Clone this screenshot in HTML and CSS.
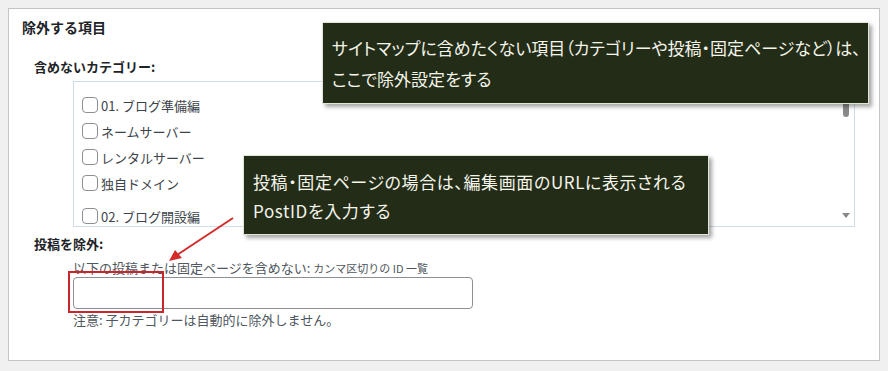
FILE: index.html
```html
<!DOCTYPE html>
<html lang="ja">
<head>
    <meta charset="UTF-8">
    <meta name="viewport" content="width=device-width, initial-scale=1.0">
    <title>除外する項目</title>
    <link rel="stylesheet" href="styles.css">
</head>
<body>
    <div class="panel">
        <h3 class="panel-title">除外する項目</h3>

        <div class="field">
            <div class="field-label">含めないカテゴリー:</div>
            <div class="cat-box">
                <ul class="cat-list">
                    <li><span class="check"></span>01. ブログ準備編</li>
                    <li><span class="check"></span>ネームサーバー</li>
                    <li><span class="check"></span>レンタルサーバー</li>
                    <li><span class="check"></span>独自ドメイン</li>
                </ul>
                <ul class="cat-list cat-group">
                    <li><span class="check"></span>02. ブログ開設編</li>
                </ul>
                <span class="scroll-thumb"></span>
                <span class="scroll-arrow"></span>
            </div>
        </div>

        <div class="field field-posts">
            <div class="field-label">投稿を除外:</div>
            <div class="post-block">
                <p class="desc">以下の投稿または固定ページを含めない: <small>カンマ区切りの ID 一覧</small></p>
                <div class="input-wrap">
                    <input type="text" class="text-input">
                    <span class="mark-box"></span>
                </div>
                <p class="note">注意: 子カテゴリーは自動的に除外しません。</p>
            </div>
        </div>

        <svg class="arrow" width="80" height="60" viewBox="0 0 80 60">
            <line x1="75" y1="5" x2="19" y2="42" stroke="#d42a2a" stroke-width="2"></line>
            <polygon points="11,48 17,37 24,45" fill="#d42a2a"></polygon>
        </svg>

        <div class="callout callout-top">
            サイトマップに含めたくない項目（カテゴリーや投稿・固定ページなど）は、<br>ここで除外設定をする
        </div>
        <div class="callout callout-mid">
            投稿・固定ページの場合は、編集画面のURLに表示される<br>PostIDを入力する
        </div>
    </div>
</body>
</html>
```

FILE: styles.css
```css
body {
    margin: 8px;
    background-color: #f0f0f1;
    font-family: "Noto Sans CJK JP", "Noto Sans", sans-serif;
    color: #1d2327;
}
.panel {
    position: relative;
    height: 343px;
    padding: 8px 13px 0;
    background-color: #fff;
    border: 1px solid #c3c4c7;
}
.panel-title {
    margin: 0;
    font-size: 14px;
    line-height: 20px;
    font-weight: 700;
}
.field {
    margin-top: 20px;
    padding-left: 12px;
}
.field-label {
    font-size: 13px;
    line-height: 20px;
    font-weight: 700;
}
.cat-box {
    position: relative;
    overflow: hidden;
    width: 764px;
    height: 134px;
    margin: 4px 0 0 39px;
    padding: 10px 8px 0;
    border: 1px solid #cfdde8;
}
.cat-list {
    margin: 0;
    padding: 0;
    list-style: none;
}
.cat-group {
    margin-top: 7px;
}
.cat-list li {
    display: flex;
    align-items: center;
    height: 26px;
    font-size: 13px;
    color: #3c434a;
}
.check {
    width: 14px;
    height: 14px;
    margin-right: 3px;
    border: 1px solid #8c8f94;
    border-radius: 4px;
}
.scroll-thumb {
    position: absolute;
    top: 8px;
    right: 5px;
    width: 6px;
    height: 27px;
    border-radius: 3px;
    background-color: #8a8a8a;
}
.scroll-arrow {
    position: absolute;
    right: 4px;
    bottom: 8px;
    border-left: 4px solid transparent;
    border-right: 4px solid transparent;
    border-top: 5px solid #8a8a8a;
}
.field-posts {
    margin-top: 7px;
}
.post-block {
    margin-left: 39px;
    color: #50575e;
}
.desc {
    margin: 5px 0 0;
    font-size: 13px;
    line-height: 18px;
}
.desc small {
    font-size: 11px;
}
.input-wrap {
    position: relative;
    width: 400px;
}
.text-input {
    display: block;
    box-sizing: border-box;
    width: 400px;
    height: 32px;
    margin: 0;
    border: 1px solid #8c8f94;
    border-radius: 4px;
    background-color: #fff;
}
.mark-box {
    position: absolute;
    left: -5px;
    top: -6px;
    width: 92px;
    height: 38px;
    border: 2px solid #c8262b;
}
.note {
    margin: 2px 0 0;
    font-size: 13px;
    line-height: 18px;
}
.arrow {
    position: absolute;
    left: 149px;
    top: 204px;
}
.callout {
    position: absolute;
    box-sizing: border-box;
    padding: 9px 9px 0;
    background-color: #232c17;
    border: 1px solid #e3e6d6;
    box-shadow: 3px 3px 4px rgba(0, 0, 0, 0.35);
    color: #f4f4ea;
    font-size: 17px;
    line-height: 31px;
    font-feature-settings: "palt";
    white-space: nowrap;
}
.callout-top {
    left: 313px;
    top: 13px;
    width: 547px;
    height: 82px;
}
.callout-mid {
    left: 234px;
    top: 146px;
    width: 466px;
    height: 80px;
    padding-top: 11px;
    line-height: 29px;
    letter-spacing: 0.6px;
}
```
